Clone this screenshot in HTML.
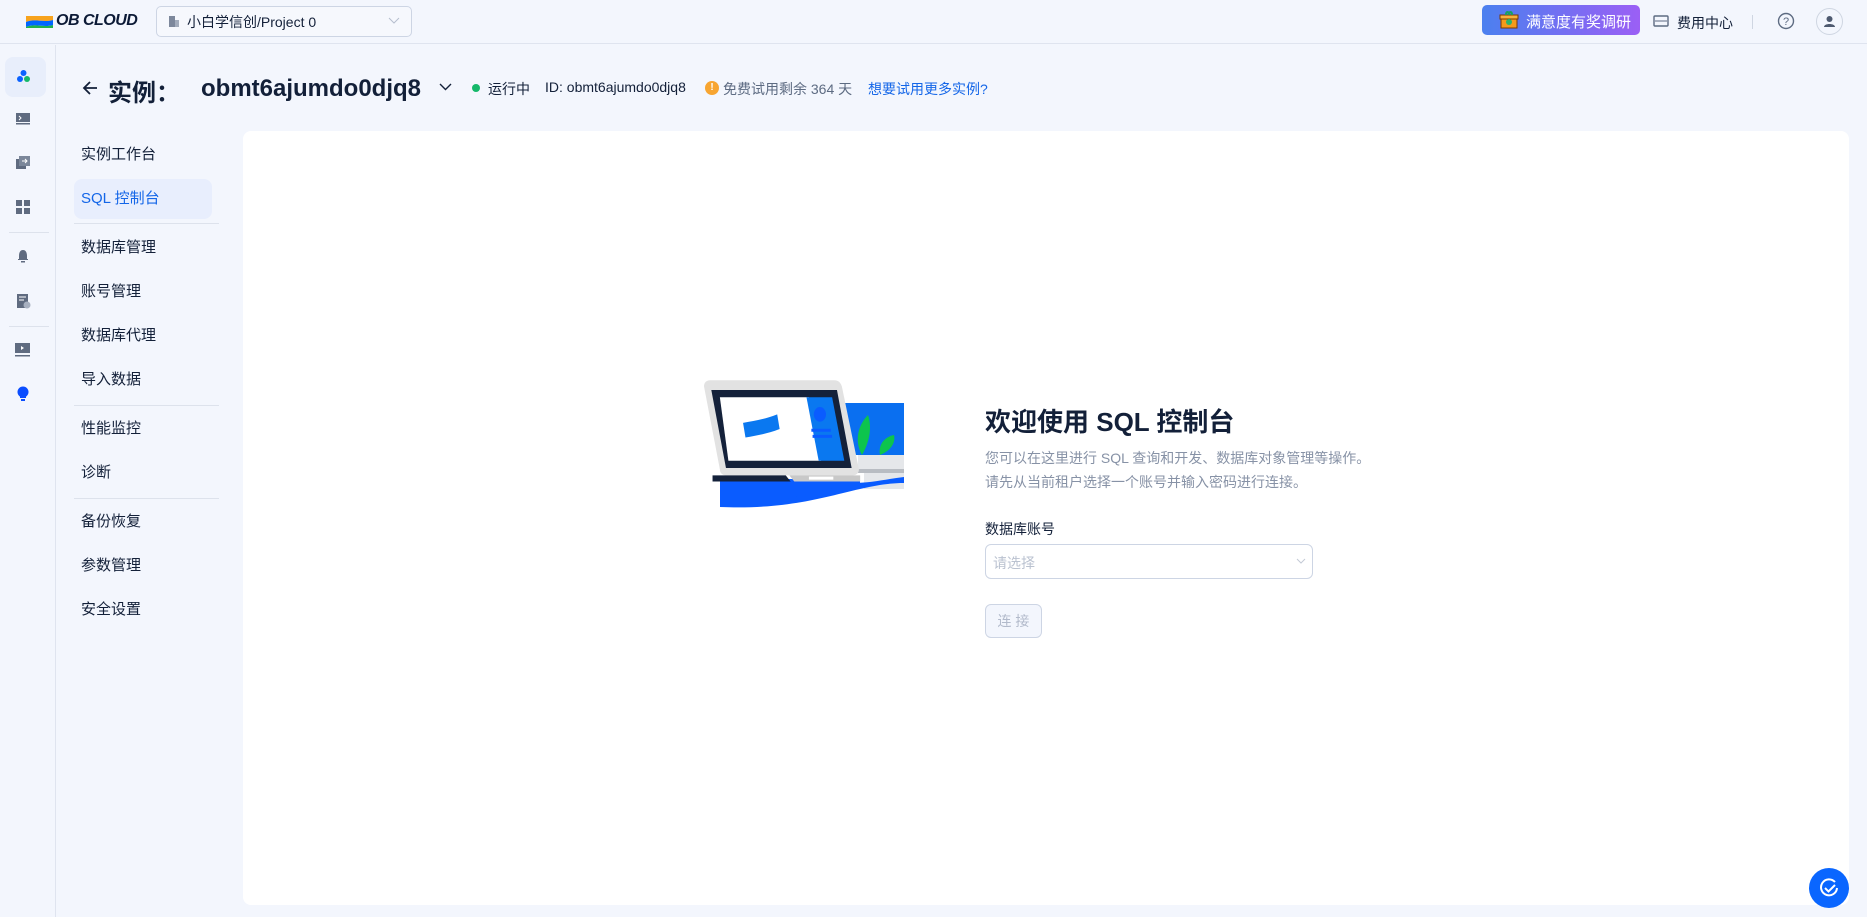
<!DOCTYPE html>
<html><head><meta charset="utf-8"><style>
*{margin:0;padding:0;box-sizing:border-box}
body{width:1867px;height:917px;overflow:hidden;background:#f3f6fd;font-family:"Liberation Sans","Noto Sans CJK SC",sans-serif;color:#132039;position:relative}
.abs{position:absolute}
.hdr{left:0;top:0;width:1867px;height:44px;border-bottom:1px solid #dfe4ef}
.rail{left:0;top:45px;width:56px;height:872px;border-right:1px solid #dfe4ef}
.nav a{position:absolute;left:81px;font-size:15px;color:#132039;line-height:20px}
.hr{position:absolute;left:74px;width:145px;height:1px;background:#dde2ec}
</style></head><body>
<div class="abs hdr"></div>
<!-- logo -->
<svg class="abs" style="left:25px;top:13px" width="30" height="18" viewBox="0 0 30 18"><path d="M1 3h27v4c-9 3-18-2-27 2z" fill="#f7a31d"/><path d="M1 9c9-4 18 1 27-2v5c-9 3-18-2-27 2z" fill="#0066ff"/><path d="M1 14c9-4 18 1 27-2v3H1z" fill="#22b14c"/></svg>
<div class="abs" style="left:56px;top:12px;font-size:16px;font-weight:bold;font-style:italic;letter-spacing:-0.5px;color:#0c1a36">OB CLOUD</div>
<div class="abs" style="left:156px;top:6px;width:256px;height:31px;border:1px solid #cdd5e4;border-radius:5px;background:#f6f8fd"></div>
<svg class="abs" style="left:168px;top:15px" width="12" height="13"><rect x="1" y="1" width="6" height="11" fill="#7d889c"/><rect x="7" y="5" width="4" height="7" fill="#a3acbc"/></svg>
<div class="abs" style="left:187px;top:12px;font-size:14px;color:#132039">小白学信创/Project 0</div>
<svg class="abs" style="left:388px;top:17px" width="12" height="8"><path d="M1 1l5 5 5-5" stroke="#b6bfce" fill="none"/></svg>
<div class="abs" style="left:1482px;top:5px;width:158px;height:30px;border-radius:5px;background:linear-gradient(90deg,#4b80ef,#9b5ff5)"></div>
<svg class="abs" style="left:1499px;top:10px" width="20" height="20"><rect x="2" y="6" width="16" height="12" fill="#f59a1b" stroke="#7a3a00"/><rect x="1" y="5" width="18" height="4" fill="#f7b13d" stroke="#7a3a00"/><circle cx="10" cy="12" r="3" fill="#2db36a"/><path d="M7 5c0-4 3-4 3 0M13 5c0-4-3-4-3 0" stroke="#1aa060" fill="none" stroke-width="2"/></svg>
<div class="abs" style="left:1526px;top:11px;font-size:15px;color:#fff">满意度有奖调研</div>
<svg class="abs" style="left:1653px;top:15px" width="16" height="12"><rect x="1" y="1" width="14" height="10" rx="1" fill="none" stroke="#5d6b82" stroke-width="1.4"/><path d="M2 6h12" stroke="#5d6b82"/></svg>
<div class="abs" style="left:1677px;top:13px;font-size:14px">费用中心</div>
<div class="abs" style="left:1752px;top:15px;width:1px;height:14px;background:#cfd6e2"></div>
<svg class="abs" style="left:1777px;top:12px" width="18" height="18"><circle cx="9" cy="9" r="7.5" fill="none" stroke="#5d6b82" stroke-width="1.4"/><text x="9" y="13" font-size="11" text-anchor="middle" fill="#5d6b82" font-family="Liberation Sans">?</text></svg>
<div class="abs" style="left:1816px;top:8px;width:27px;height:27px;border:1px solid #cfd6e2;border-radius:50%"></div>
<svg class="abs" style="left:1822px;top:14px" width="15" height="15"><circle cx="7.5" cy="5" r="3" fill="#4e5a70"/><path d="M2 13c0-4 11-4 11 0z" fill="#4e5a70"/></svg>

<div class="abs rail"></div>
<div class="abs" style="left:5px;top:57px;width:41px;height:40px;border-radius:8px;background:#e8eefb"></div>
<svg class="abs" style="left:16px;top:69px" width="16" height="15"><circle cx="7.5" cy="4" r="3" fill="#0a62ff"/><circle cx="4" cy="10" r="3" fill="#0a62ff"/><circle cx="11" cy="10" r="3" fill="#16b86a"/></svg>
<svg class="abs" style="left:16px;top:113px" width="14" height="12"><rect x="0" y="0" width="14" height="9" fill="#5f6b80"/><path d="M3 3l2 2-2 2" stroke="#fff" fill="none"/><rect y="10" width="14" height="1.5" fill="#5f6b80"/></svg>
<svg class="abs" style="left:16px;top:156px" width="14" height="13"><rect x="0" y="3" width="10" height="10" fill="#5f6b80"/><rect x="3" y="0" width="11" height="10" fill="#7b879a"/><path d="M6 5h5M9 3l2 2-2 2" stroke="#fff" fill="none"/></svg>
<svg class="abs" style="left:16px;top:200px" width="14" height="14"><rect x="0" y="0" width="6" height="6" fill="#5f6b80"/><rect x="8" y="0" width="6" height="6" fill="#5f6b80"/><rect x="0" y="8" width="6" height="6" fill="#5f6b80"/><rect x="8" y="8" width="6" height="6" fill="#5f6b80"/></svg>
<div class="abs" style="left:9px;top:232px;width:40px;height:1px;background:#dde2ec"></div>
<svg class="abs" style="left:17px;top:249px" width="12" height="14"><path d="M6 1c-3 0-4 3-4 6v3H1v1h10v-1h-1V7c0-3-1-6-4-6z" fill="#5f6b80"/><rect x="4" y="12" width="4" height="1.5" fill="#5f6b80"/></svg>
<svg class="abs" style="left:17px;top:294px" width="14" height="15"><rect x="0" y="0" width="11" height="14" fill="#5f6b80"/><path d="M2 3h7M2 6h5" stroke="#fff"/><circle cx="10" cy="11" r="3.5" fill="#a7b0c0"/></svg>
<div class="abs" style="left:9px;top:326px;width:40px;height:1px;background:#dde2ec"></div>
<svg class="abs" style="left:15px;top:343px" width="15" height="14"><rect x="0" y="0" width="15" height="10" fill="#5f6b80"/><path d="M6 3l3 2-3 2z" fill="#fff"/><rect y="12" width="15" height="1.5" fill="#5f6b80"/></svg>
<svg class="abs" style="left:17px;top:386px" width="12" height="16"><circle cx="6" cy="6" r="5.5" fill="#0a4dff"/><path d="M3 9h6v3H3z" fill="#0a4dff"/><rect x="4" y="13" width="4" height="2" fill="#0a4dff"/></svg>

<!-- title -->
<svg class="abs" style="left:81px;top:80px" width="18" height="16"><path d="M16 8H3M9 2L3 8l6 6" stroke="#132039" stroke-width="1.8" fill="none"/></svg>
<div class="abs" style="left:108px;top:73px;font-size:24px;font-weight:bold">实例：</div>
<div class="abs" style="left:201px;top:75px;font-size:24px;font-weight:bold">obmt6ajumdo0djq8</div>
<svg class="abs" style="left:439px;top:83px" width="13" height="9"><path d="M1 1l5.5 5.5L12 1" stroke="#132039" stroke-width="1.4" fill="none"/></svg>
<div class="abs" style="left:472px;top:84px;width:8px;height:8px;border-radius:50%;background:#15b86a"></div>
<div class="abs" style="left:488px;top:79px;font-size:14px">运行中</div>
<div class="abs" style="left:545px;top:79px;font-size:14px">ID: obmt6ajumdo0djq8</div>
<div class="abs" style="left:705px;top:81px;width:14px;height:14px;border-radius:50%;background:#f7a531;color:#fff;font-size:10px;font-weight:bold;text-align:center;line-height:14px">!</div>
<div class="abs" style="left:723px;top:79px;font-size:14px;color:#5d6b82">免费试用剩余 364 天</div>
<div class="abs" style="left:868px;top:79px;font-size:14px;color:#1466e8">想要试用更多实例?</div>

<!-- nav -->
<div class="abs" style="left:74px;top:179px;width:138px;height:40px;border-radius:8px;background:#e8eefd"></div>
<div class="nav">
<a style="top:145px">实例工作台</a>
<a style="top:189px;color:#1466e8">SQL 控制台</a>
<a style="top:238px">数据库管理</a>
<a style="top:282px">账号管理</a>
<a style="top:326px">数据库代理</a>
<a style="top:370px">导入数据</a>
<a style="top:419px">性能监控</a>
<a style="top:463px">诊断</a>
<a style="top:512px">备份恢复</a>
<a style="top:556px">参数管理</a>
<a style="top:600px">安全设置</a>
</div>
<div class="hr" style="top:223px"></div>
<div class="hr" style="top:405px"></div>
<div class="hr" style="top:498px"></div>

<!-- card -->
<div class="abs" style="left:243px;top:131px;width:1606px;height:774px;background:#fff;border-radius:8px"></div>

<!-- illustration -->
<svg class="abs" style="left:702px;top:379px" width="202" height="130" viewBox="0 0 202 130">
<rect x="107" y="24" width="95" height="52" fill="#0a6ff0"/>
<path d="M160 76c-8-14-4-30 6-40 4 12 2 26-6 40z" fill="#0dc44d"/>
<path d="M178 76c-2-10 4-18 14-20 2 8-4 16-14 20z" fill="#0dc44d"/>
<rect x="156" y="76" width="46" height="16" fill="#e5e7ea"/>
<rect x="156" y="90" width="46" height="4" fill="#b8bcc2"/>
<rect x="162" y="94" width="40" height="16" fill="#e5e7ea"/>
<path d="M18 104H150c20 0 35-4 52-6V104c-50 0-90 28-184 24z" fill="#0a5cff"/>
<path d="M18 100h140v4c-40 6-90 24-140 24z" fill="#0a5cff"/>
<g transform="translate(2,0) scale(1.22)">
<path d="M0 6c0-3 2-5 5-5h102c3 0 5 2 6 5l14 68c0 3-2 5-5 5H18c-3 0-5-2-5-5z" fill="#e2e2e2"/>
<path d="M6 9h103l12 64H18z" fill="#14213a"/>
<path d="M13 15h73l10 52H20z" fill="#fff"/>
<path d="M84 15h21l10 52H94z" fill="#0a78f0"/>
<ellipse cx="95" cy="29" rx="5" ry="6" fill="#0a5cff"/>
<path d="M88 42h16M89 47h16" stroke="#0a5cff" stroke-width="2.5"/>
<path d="M32 36c10-2 18-3 28-7l2 12c-10 4-18 5-28 7z" fill="#0a78f0"/>
<path d="M7 79h60l4 5H7z" fill="#14213a"/>
<path d="M70 79h58v5H74z" fill="#c8c8c8"/>
<rect x="86" y="80" width="20" height="2.5" fill="#fff"/>
</g>
</svg>

<div class="abs" style="left:985px;top:402px;font-size:26px;font-weight:bold">欢迎使用 SQL 控制台</div>
<div class="abs" style="left:985px;top:448px;font-size:14px;color:#8792a6">您可以在这里进行 SQL 查询和开发、数据库对象管理等操作。</div>
<div class="abs" style="left:985px;top:472px;font-size:14px;color:#8792a6">请先从当前租户选择一个账号并输入密码进行连接。</div>
<div class="abs" style="left:985px;top:519px;font-size:14px">数据库账号</div>
<div class="abs" style="left:985px;top:544px;width:328px;height:35px;border:1px solid #cdd5e4;border-radius:6px"></div>
<div class="abs" style="left:993px;top:553px;font-size:14px;color:#bac2d0">请选择</div>
<svg class="abs" style="left:1296px;top:558px" width="10" height="7"><path d="M1 1l4 4 4-4" stroke="#c3cad6" fill="none"/></svg>
<div class="abs" style="left:985px;top:604px;width:57px;height:34px;border:1px solid #cdd5e4;border-radius:6px;background:#f3f6fd;color:#b2bacb;font-size:14px;text-align:center;line-height:32px">连 接</div>

<div class="abs" style="left:1809px;top:868px;width:40px;height:40px;border-radius:50%;background:#0a66ff"></div>
<svg class="abs" style="left:1817px;top:876px" width="24" height="24"><path d="M18 6A8 8 0 1 0 20 12" stroke="#fff" stroke-width="2" fill="none"/><path d="M8 12l3.5 3.5L18 9" stroke="#fff" stroke-width="2" fill="none"/></svg>
</body></html>
